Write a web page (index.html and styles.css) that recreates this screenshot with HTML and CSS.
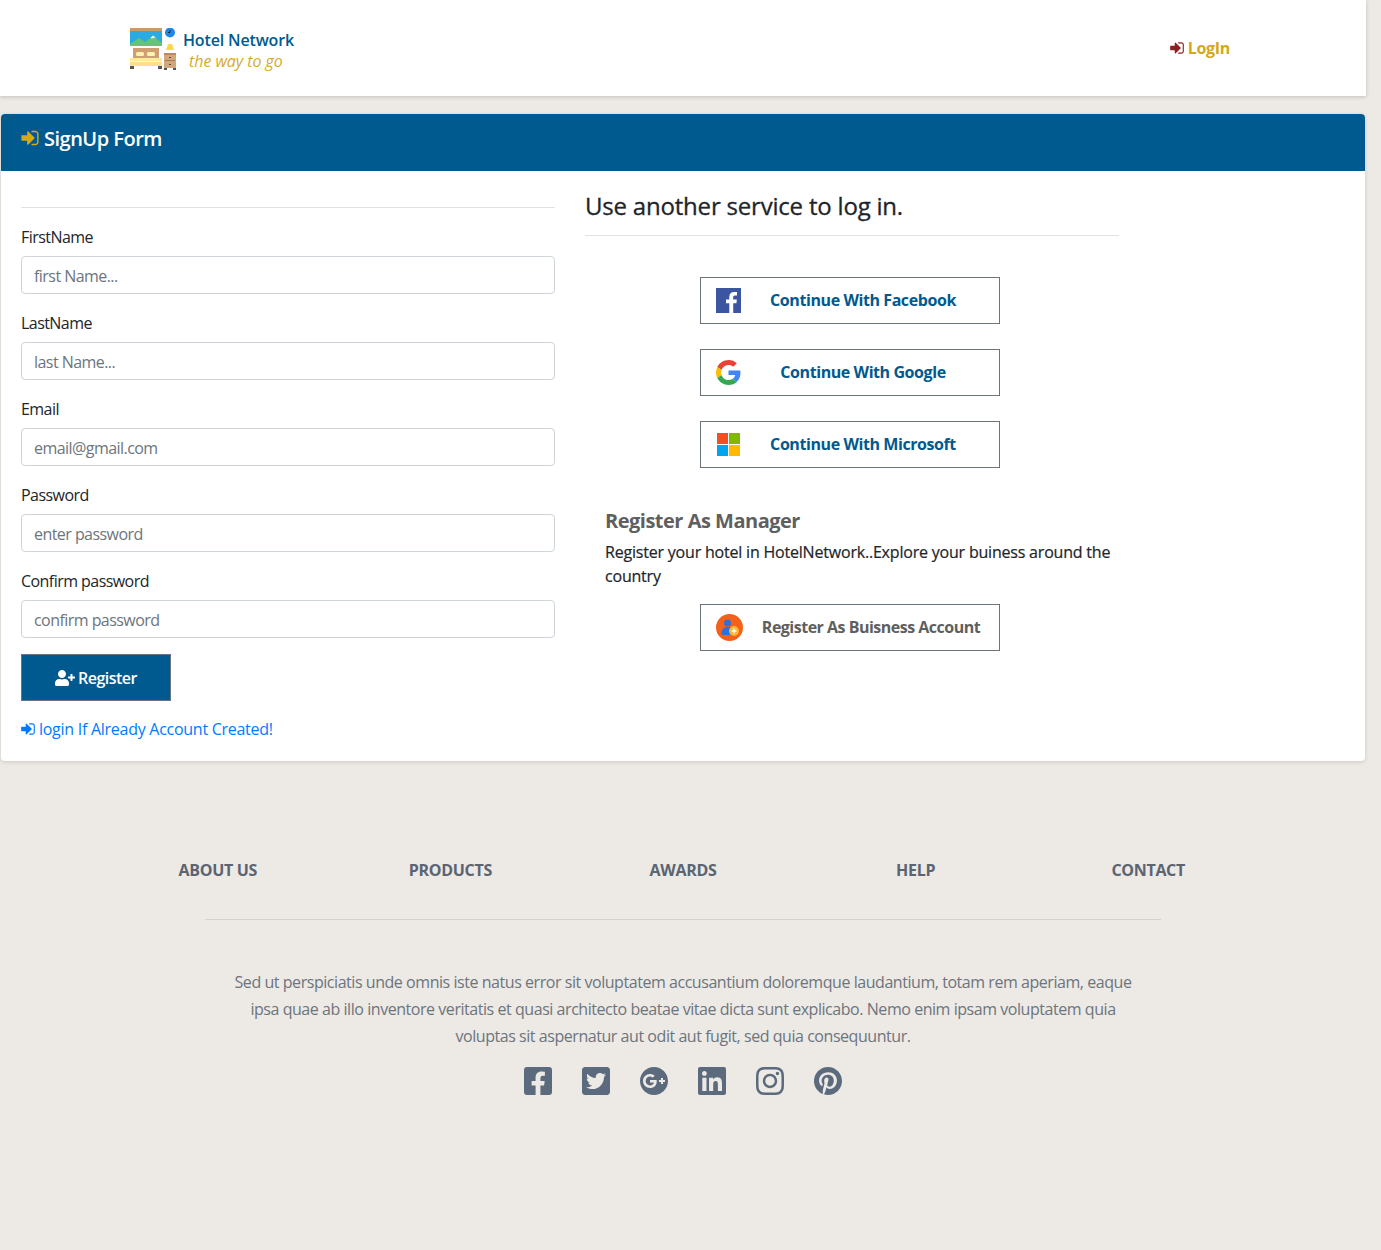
FILE: index.html
```html
<!DOCTYPE html>
<html lang="en">
<head>
    <meta charset="UTF-8">
    <meta name="viewport" content="width=device-width, initial-scale=1.0">
    <title>Hotel Network - SignUp</title>
    <link rel="stylesheet" href="styles.css">
</head>
<body>
    <svg class="sprites" xmlns="http://www.w3.org/2000/svg">
        <symbol id="i-signin" viewBox="0 0 1536 1792"><path d="M1184 896q0 26-19 45l-544 544q-19 19-45 19t-45-19-19-45v-288h-448q-26 0-45-19t-19-45v-384q0-26 19-45t45-19h448v-288q0-26 19-45t45-19 45 19l544 544q19 19 19 45zm352-352v704q0 119-84.500 203.500t-203.500 84.500h-320q-13 0-22.500-9.500t-9.500-22.500q0-4-1-20t-.5-26.500 3-23.500 10-19.500 20.500-6.500h320q66 0 113-47t47-113v-704q0-66-47-113t-113-47h-312l-11.500-1-11.500-3-8-5.500-7-9-2-13.500q0-4-1-20t-.5-26.500 3-23.500 10-19.500 20.500-6.500h320q119 0 203.500 84.500t84.500 203.500z"/></symbol>
    </svg>

    <div class="page">
        <header class="topbar">
            <a class="brand" href="#">
                <svg class="brand-logo" viewBox="0 0 46 42" width="46" height="42">
                    <rect x="0" y="0" width="32" height="3" fill="#c69c6d"/>
                    <rect x="0" y="3" width="32" height="15" fill="#29abe2"/>
                    <path d="M0 18v-2l9-6 6 4 8-6 9 7v3z" fill="#6cc17a"/>
                    <path d="M20.500 10l2.500-2.500 3 2.500-2-.5-1.500 1z" fill="#fff"/>
                    <circle cx="40" cy="4.500" r="5" fill="#1e88e5"/>
                    <path d="M40 2v2.500h-2" fill="none" stroke="#123" stroke-width="1"/>
                    <path d="M38 16h4l2 6h-8z" fill="#ffd54f"/>
                    <rect x="34" y="25" width="12" height="15" fill="#d2a77c"/>
                    <rect x="34" y="25" width="12" height="2" fill="#b98b5e"/>
                    <rect x="35" y="32" width="10" height="1" fill="#a07c55"/>
                    <rect x="39" y="29" width="2" height="1" fill="#5d4a36"/>
                    <rect x="39" y="36" width="2" height="1" fill="#5d4a36"/>
                    <rect x="34" y="40" width="3" height="2" fill="#555"/>
                    <rect x="43" y="40" width="3" height="2" fill="#555"/>
                    <rect x="3" y="20" width="26" height="11" fill="#cf9f72"/>
                    <rect x="6" y="24" width="8" height="4" rx="1.500" fill="#fff3b0"/>
                    <rect x="17" y="24" width="8" height="4" rx="1.500" fill="#fff3b0"/>
                    <rect x="0" y="30" width="32" height="3" fill="#ffe9a0"/>
                    <rect x="0" y="33" width="32" height="1" fill="#fff8d0"/>
                    <rect x="0" y="34" width="32" height="4" fill="#ffe08a"/>
                    <rect x="0" y="38" width="4" height="3" fill="#555"/>
                    <rect x="28" y="38" width="4" height="3" fill="#555"/>
                </svg>
                <span class="brand-text">
                    <span class="brand-name">Hotel Network</span>
                    <em class="brand-tag">the way to go</em>
                </span>
            </a>
            <a class="login-link" href="#">
                <svg class="icon"><use href="#i-signin"/></svg>
                <span>LogIn</span>
            </a>
        </header>

        <main class="card">
            <div class="card-head">
                <svg class="icon"><use href="#i-signin"/></svg>
                <span>SignUp Form</span>
            </div>
            <div class="card-body">
                <form class="signup">
                    <hr class="rule">
                    <label for="first">FirstName</label>
                    <input id="first" type="text" placeholder="first Name...">
                    <label for="last">LastName</label>
                    <input id="last" type="text" placeholder="last Name...">
                    <label for="email">Email</label>
                    <input id="email" type="text" placeholder="email@gmail.com">
                    <label for="pass">Password</label>
                    <input id="pass" type="text" placeholder="enter password">
                    <label for="confirm">Confirm password</label>
                    <input id="confirm" type="text" placeholder="confirm password">
                    <button class="register" type="button">
                        <svg class="user-plus" viewBox="0 0 640 512"><path d="M624 208h-64v-64c0-8.800-7.200-16-16-16h-32c-8.800 0-16 7.200-16 16v64h-64c-8.800 0-16 7.200-16 16v32c0 8.800 7.200 16 16 16h64v64c0 8.800 7.200 16 16 16h32c8.800 0 16-7.200 16-16v-64h64c8.800 0 16-7.200 16-16v-32c0-8.800-7.200-16-16-16zm-400 48c70.700 0 128-57.300 128-128S294.700 0 224 0 96 57.300 96 128s57.300 128 128 128zm89.600 32h-16.700c-22.200 10.200-46.900 16-72.900 16s-50.600-5.800-72.900-16h-16.700C60.200 288 0 348.200 0 422.400V464c0 26.500 21.500 48 48 48h352c26.500 0 48-21.500 48-48v-41.600c0-74.200-60.200-134.400-134.400-134.400z"/></svg>
                        <span>Register</span>
                    </button>
                    <a class="already" href="#">
                        <svg class="icon"><use href="#i-signin"/></svg>
                        <span>login If Already Account Created!</span>
                    </a>
                </form>

                <section class="services">
                    <h2>Use another service to log in.</h2>
                    <hr class="rule">
                    <div class="service-list">
                        <a class="service" href="#">
                            <svg class="service-icon" viewBox="0 0 25 25" width="25" height="25">
                                <rect width="25" height="25" fill="#3b55a0"/>
                                <path d="M17.200 25v-9.700h3.200l.5-3.800h-3.700V9.200c0-1.100.3-1.800 1.800-1.800h2V4c-.3 0-1.500-.1-2.900-.1-2.900 0-4.800 1.700-4.800 5v2.600H10v3.800h3.300V25z" fill="#fff"/>
                            </svg>
                            <span class="service-text">Continue With Facebook</span>
                        </a>
                        <a class="service" href="#">
                            <svg class="service-icon" viewBox="0 0 48 48" width="25" height="25">
                                <path fill="#EA4335" d="M24 9.500c3.540 0 6.710 1.220 9.210 3.600l6.850-6.850C35.900 2.380 30.470 0 24 0 14.620 0 6.510 5.380 2.560 13.220l7.980 6.190C12.430 13.720 17.740 9.500 24 9.500z"/>
                                <path fill="#4285F4" d="M46.980 24.550c0-1.570-.15-3.090-.38-4.550H24v9.020h12.940c-.58 2.960-2.260 5.480-4.780 7.180l7.730 6c4.510-4.180 7.090-10.360 7.090-17.650z"/>
                                <path fill="#FBBC05" d="M10.530 28.590c-.48-1.450-.76-2.990-.76-4.590s.27-3.140.76-4.590l-7.980-6.190C.92 16.460 0 20.120 0 24c0 3.880.92 7.540 2.560 10.780l7.970-6.190z"/>
                                <path fill="#34A853" d="M24 48c6.480 0 11.930-2.130 15.890-5.810l-7.730-6c-2.150 1.450-4.920 2.300-8.160 2.300-6.260 0-11.570-4.220-13.470-9.910l-7.980 6.190C6.510 42.620 14.620 48 24 48z"/>
                            </svg>
                            <span class="service-text">Continue With Google</span>
                        </a>
                        <a class="service" href="#">
                            <svg class="service-icon" viewBox="0 0 25 25" width="25" height="25">
                                <rect x="1" y="1" width="11" height="11" fill="#f25022"/>
                                <rect x="13" y="1" width="11" height="11" fill="#7fba00"/>
                                <rect x="1" y="13" width="11" height="11" fill="#00a4ef"/>
                                <rect x="13" y="13" width="11" height="11" fill="#ffb900"/>
                            </svg>
                            <span class="service-text">Continue With Microsoft</span>
                        </a>
                    </div>
                    <div class="manager">
                        <h3>Register As Manager</h3>
                        <p>Register your hotel in HotelNetwork..Explore your buiness around the country</p>
                    </div>
                    <a class="service service-biz" href="#">
                        <svg class="service-icon" viewBox="0 0 27 27" width="27" height="27">
                            <circle cx="13.500" cy="13.500" r="13.500" fill="#f4611a"/>
                            <circle cx="11.500" cy="9" r="3.500" fill="#2f6fd6"/>
                            <path d="M5.500 20c0-4.500 2.500-7 6-7s4.500 1.500 5.500 3l-2 5H7z" fill="#2f6fd6"/>
                            <circle cx="18" cy="17" r="5" fill="#ffb52e"/>
                            <path d="M18 14.500v5M15.500 17h5" stroke="#fff" stroke-width="1.300"/>
                        </svg>
                        <span class="service-text">Register As Buisness Account</span>
                    </a>
                </section>
            </div>
        </main>

        <footer class="footer">
            <nav class="footer-nav">
                <a href="#">ABOUT US</a>
                <a href="#">PRODUCTS</a>
                <a href="#">AWARDS</a>
                <a href="#">HELP</a>
                <a href="#">CONTACT</a>
            </nav>
            <hr class="footer-rule">
            <p class="footer-text">Sed ut perspiciatis unde omnis iste natus error sit voluptatem accusantium doloremque laudantium, totam rem aperiam, eaque ipsa quae ab illo inventore veritatis et quasi architecto beatae vitae dicta sunt explicabo. Nemo enim ipsam voluptatem quia voluptas sit aspernatur aut odit aut fugit, sed quia consequuntur.</p>
            <div class="social">
                <a href="#"><svg viewBox="0 0 448 512"><path d="M400 32H48A48 48 0 0 0 0 80v352a48 48 0 0 0 48 48h137.250V327.690h-63V256h63v-54.640c0-62.150 37-96.480 93.670-96.480 27.140 0 55.520 4.840 55.520 4.840v61h-31.270c-30.810 0-40.420 19.120-40.420 38.730V256h68.780l-11 71.690h-57.780V480H400a48 48 0 0 0 48-48V80a48 48 0 0 0-48-48z"/></svg></a>
                <a href="#"><svg viewBox="0 0 448 512"><path d="M400 32H48C21.500 32 0 53.500 0 80v352c0 26.500 21.500 48 48 48h352c26.500 0 48-21.500 48-48V80c0-26.500-21.500-48-48-48zm-48.900 158.800c.2 2.800.2 5.700.2 8.500 0 86.700-66 186.600-186.600 186.600-37.200 0-71.700-10.800-100.700-29.400 5.300.6 10.400.8 15.800.8 30.700 0 58.900-10.400 81.400-28-28.800-.6-53-19.500-61.300-45.500 10.100 1.500 19.200 1.500 29.600-1.200-30-6.100-52.500-32.500-52.500-64.400v-.8c8.700 4.900 18.900 7.900 29.600 8.300a65.447 65.447 0 0 1-29.200-54.600c0-12.200 3.200-23.400 8.900-33.100 32.300 39.800 80.800 65.800 135.200 68.600-9.300-44.500 24-80.600 64-80.600 18.900 0 35.900 7.900 47.900 20.700 14.800-2.800 29-8.300 41.600-15.800-4.900 15.200-15.200 28-28.800 36.100 13.200-1.400 26-5.100 37.800-10.200-8.900 13.100-20.100 24.700-32.900 34z"/></svg></a>
                <a href="#"><svg viewBox="0 0 496 512"><path d="M248 8C111.100 8 0 119.100 0 256s111.100 248 248 248 248-111.100 248-248S384.900 8 248 8zm-70.700 372c-68.800 0-124-55.500-124-124s55.200-124 124-124c31.300 0 60.100 11 83 32.300l-33.600 32.600c-13.200-12.900-31.300-19.100-49.400-19.100-42.900 0-77.200 35.500-77.200 78.100s34.200 78.100 77.200 78.100c32.600 0 64.900-19.100 70.100-53.300h-70.100v-42.600h116.900c1.300 6.800 1.900 13.600 1.900 20.700 0 70.800-47.500 121.200-118.800 121.200zm230.200-106.200v35.500H372v-35.500h-35.500v-35.500H372v-35.500h35.500v35.500h35.200v35.500h-35.200z"/></svg></a>
                <a href="#"><svg viewBox="0 0 448 512"><path d="M416 32H31.900C14.300 32 0 46.500 0 64.300v383.400C0 465.500 14.300 480 31.900 480H416c17.600 0 32-14.500 32-32.300V64.300c0-17.800-14.400-32.300-32-32.300zM135.400 416H69V202.200h66.500V416zm-33.200-243c-21.300 0-38.500-17.300-38.500-38.500S80.900 96 102.200 96c21.200 0 38.500 17.300 38.500 38.500 0 21.300-17.200 38.500-38.500 38.500zm282.100 243h-66.400V312c0-24.800-.5-56.700-34.500-56.700-34.600 0-39.900 27-39.900 54.900V416h-66.400V202.200h63.700v29.200h.9c8.900-16.800 30.600-34.500 62.900-34.500 67.200 0 79.700 44.300 79.700 101.900V416z"/></svg></a>
                <a href="#"><svg viewBox="0 0 448 512"><path d="M224.100 141c-63.600 0-114.900 51.300-114.900 114.900s51.300 114.900 114.900 114.900S339 319.500 339 255.900 287.700 141 224.100 141zm0 189.600c-41.100 0-74.700-33.500-74.700-74.700s33.500-74.700 74.700-74.700 74.700 33.500 74.700 74.700-33.600 74.700-74.700 74.700zm146.400-194.300c0 14.900-12 26.800-26.800 26.800-14.900 0-26.800-12-26.800-26.800s12-26.800 26.800-26.800 26.800 12 26.800 26.800zm76.100 27.200c-1.700-35.900-9.900-67.700-36.200-93.900-26.200-26.200-58-34.400-93.900-36.200-37-2.100-147.900-2.100-184.900 0-35.800 1.700-67.600 9.900-93.900 36.100s-34.400 58-36.200 93.900c-2.100 37-2.100 147.900 0 184.900 1.700 35.900 9.900 67.700 36.200 93.900s58 34.400 93.900 36.200c37 2.100 147.900 2.100 184.900 0 35.900-1.700 67.700-9.900 93.900-36.200 26.200-26.200 34.400-58 36.200-93.900 2.100-37 2.100-147.800 0-184.800zM398.800 388c-7.800 19.600-22.900 34.700-42.600 42.600-29.500 11.700-99.500 9-132.100 9s-102.700 2.600-132.100-9c-19.600-7.800-34.700-22.900-42.600-42.600-11.700-29.500-9-99.500-9-132.100s-2.600-102.700 9-132.100c7.800-19.600 22.900-34.700 42.600-42.600 29.500-11.700 99.500-9 132.100-9s102.700-2.600 132.100 9c19.600 7.800 34.700 22.900 42.600 42.600 11.700 29.500 9 99.500 9 132.100s2.700 102.700-9 132.100z"/></svg></a>
                <a href="#"><svg viewBox="0 0 496 512"><path d="M496 256c0 137-111 248-248 248-25.600 0-50.200-3.900-73.400-11.100 10.100-16.500 25.200-43.500 30.800-65 3-11.600 15.400-59 15.400-59 8.100 15.400 31.700 28.500 56.800 28.500 74.800 0 128.700-68.800 128.700-154.300 0-81.900-66.900-143.200-152.900-143.200-107 0-163.900 71.800-163.900 150.100 0 36.400 19.400 81.700 50.300 96.100 4.700 2.200 7.200 1.200 8.300-3.300.8-3.400 5-20.300 6.900-28.100.6-2.500.3-4.700-1.700-7.100-10.100-12.500-18.300-35.300-18.300-56.600 0-54.700 41.400-107.600 112-107.600 60.900 0 103.600 41.500 103.600 100.900 0 67.100-33.900 113.600-78 113.600-24.300 0-42.600-20.100-36.700-44.800 7-29.500 20.500-61.300 20.500-82.600 0-19-10.200-34.900-31.400-34.900-24.900 0-44.900 25.700-44.900 60.200 0 22 7.400 36.800 7.400 36.800s-24.500 103.800-29 123.200c-5 21.400-3 51.600-.9 71.200C65.400 450.900 0 361.100 0 256 0 119 111 8 248 8s248 111 248 248z"/></svg></a>
            </div>
        </footer>
    </div>
</body>
</html>
```
FILE: styles.css
```css
* {
    box-sizing: border-box;
}

html,
body {
    margin: 0;
    padding: 0;
}

body {
    font-family: "Open Sans", "Noto Sans", sans-serif;
    font-size: 16px;
    letter-spacing: -0.3px;
    background-color: #ede9e5;
    color: #212529;
    min-height: 1250px;
}

a {
    text-decoration: none;
}

.sprites {
    display: none;
}

.page {
    width: 1366px;
}

.icon {
    width: 14px;
    height: 16px;
    fill: currentColor;
    flex: none;
}

/* top bar */
.topbar {
    height: 96px;
    background-color: #ffffff;
    box-shadow: 0 1px 4px rgba(0, 0, 0, 0.18);
    display: flex;
    justify-content: space-between;
    padding: 28px 136px 0 130px;
}

.brand {
    display: flex;
    align-items: flex-start;
    gap: 7px;
}

.brand-text {
    display: flex;
    flex-direction: column;
    padding-top: 2px;
}

.brand-name {
    font-size: 16px;
    font-weight: 600;
    letter-spacing: -0.15px;
    color: #005a8f;
    line-height: 21px;
}

.brand-tag {
    font-size: 16px;
    letter-spacing: -0.05px;
    color: #d4ac2a;
    line-height: 21px;
    padding-left: 6px;
}

.login-link {
    display: flex;
    align-items: center;
    gap: 4px;
    height: 40px;
    color: #d4a917;
    font-weight: 700;
    font-size: 16px;
}

.login-link .icon {
    color: #8b1f24;
}

/* signup card */
.card {
    margin: 18px 1px 0;
    height: 647px;
    background-color: #ffffff;
    border-radius: 4px;
    box-shadow: 0 1px 4px rgba(0, 0, 0, 0.14);
}

.card-head {
    height: 57px;
    background-color: #005a8f;
    border-radius: 4px 4px 0 0;
    color: #ffffff;
    font-size: 20px;
    font-weight: 600;
    letter-spacing: -0.5px;
    display: flex;
    align-items: center;
    gap: 5px;
    padding: 0 20px 9px;
}

.card-head .icon {
    width: 18px;
    height: 20px;
    color: #d4a917;
}

.card-body {
    display: flex;
    gap: 30px;
    padding: 0 20px;
}

.rule {
    margin: 0;
    border: 0;
    border-top: 1px solid #e2e2e2;
}

.signup {
    width: 534px;
    padding-top: 36px;
    display: flex;
    flex-direction: column;
}

.signup label {
    line-height: 24px;
    margin-top: 17px;
    margin-bottom: 7px;
    letter-spacing: -0.55px;
}

.signup input {
    height: 38px;
    border: 1px solid #ced4da;
    border-radius: 4px;
    padding: 2px 12px 0;
    font: inherit;
    letter-spacing: -0.55px;
    background-color: #ffffff;
}

.signup input::placeholder {
    color: #6c757d;
    opacity: 1;
}

.register {
    margin-top: 16px;
    width: 150px;
    height: 47px;
    background-color: #005a8f;
    border: 1px solid #6c757d;
    color: #ffffff;
    font: inherit;
    font-weight: 600;
    letter-spacing: -0.5px;
    display: flex;
    align-items: center;
    justify-content: center;
    gap: 3px;
}

.user-plus {
    width: 20px;
    height: 16px;
    fill: currentColor;
}

.already {
    margin-top: 16px;
    color: #007bff;
    display: flex;
    align-items: center;
    gap: 4px;
    line-height: 24px;
    letter-spacing: -0.27px;
}

/* right column */
.services {
    width: 534px;
    padding-top: 17px;
}

.services h2 {
    margin: 0 0 11px;
    font-size: 24px;
    font-weight: 500;
    letter-spacing: -0.2px;
    line-height: 36px;
    -webkit-text-stroke: 0.3px currentColor;
}

.service-list {
    display: flex;
    flex-direction: column;
    gap: 25px;
    padding-top: 41px;
}

.service {
    width: 300px;
    height: 47px;
    margin-left: 115px;
    border: 1px solid #6c757d;
    display: flex;
    align-items: center;
    padding-left: 15px;
    color: #005a8f;
    font-weight: 700;
    letter-spacing: -0.42px;
    background-color: #ffffff;
}

.service-icon {
    flex: none;
    margin-right: -14px;
}

.service-text {
    flex: 1;
    text-align: center;
    padding-bottom: 2px;
}

.service-biz {
    color: #5f5f5f;
    letter-spacing: -0.5px;
}

.service-biz .service-icon {
    margin-right: 0;
}

.manager {
    padding: 38px 0 0 20px;
}

.manager h3 {
    margin: 0;
    font-size: 20px;
    font-weight: 700;
    letter-spacing: -0.5px;
    line-height: 30px;
    color: #5f5f5f;
}

.manager p {
    margin: 4px 0 16px;
    line-height: 24px;
    font-weight: 500;
    letter-spacing: -0.2px;
    color: #212529;
    -webkit-text-stroke: 0.2px currentColor;
}

/* footer */
.footer {
    padding-top: 97px;
}

.footer-nav {
    display: grid;
    grid-template-columns: repeat(5, 232.6px);
    justify-content: center;
    text-align: center;
}

.footer-nav a {
    color: #5a6472;
    font-weight: 700;
    font-size: 16px;
    line-height: 24px;
}

.footer-rule {
    width: 956px;
    margin: 37px 0 0 205px;
    border: 0;
    border-top: 1px solid #d4d2cf;
}

.footer-text {
    width: 920px;
    margin: 49px 0 0 223px;
    text-align: center;
    line-height: 27px;
    letter-spacing: -0.45px;
    color: #6c757d;
}

.social {
    display: flex;
    justify-content: center;
    gap: 30px;
    margin-top: 15px;
}

.social a {
    width: 28px;
    height: 32px;
    display: flex;
    align-items: center;
    justify-content: center;
}

.social svg {
    height: 32px;
    width: 28px;
    fill: #5b6b7d;
}
```
